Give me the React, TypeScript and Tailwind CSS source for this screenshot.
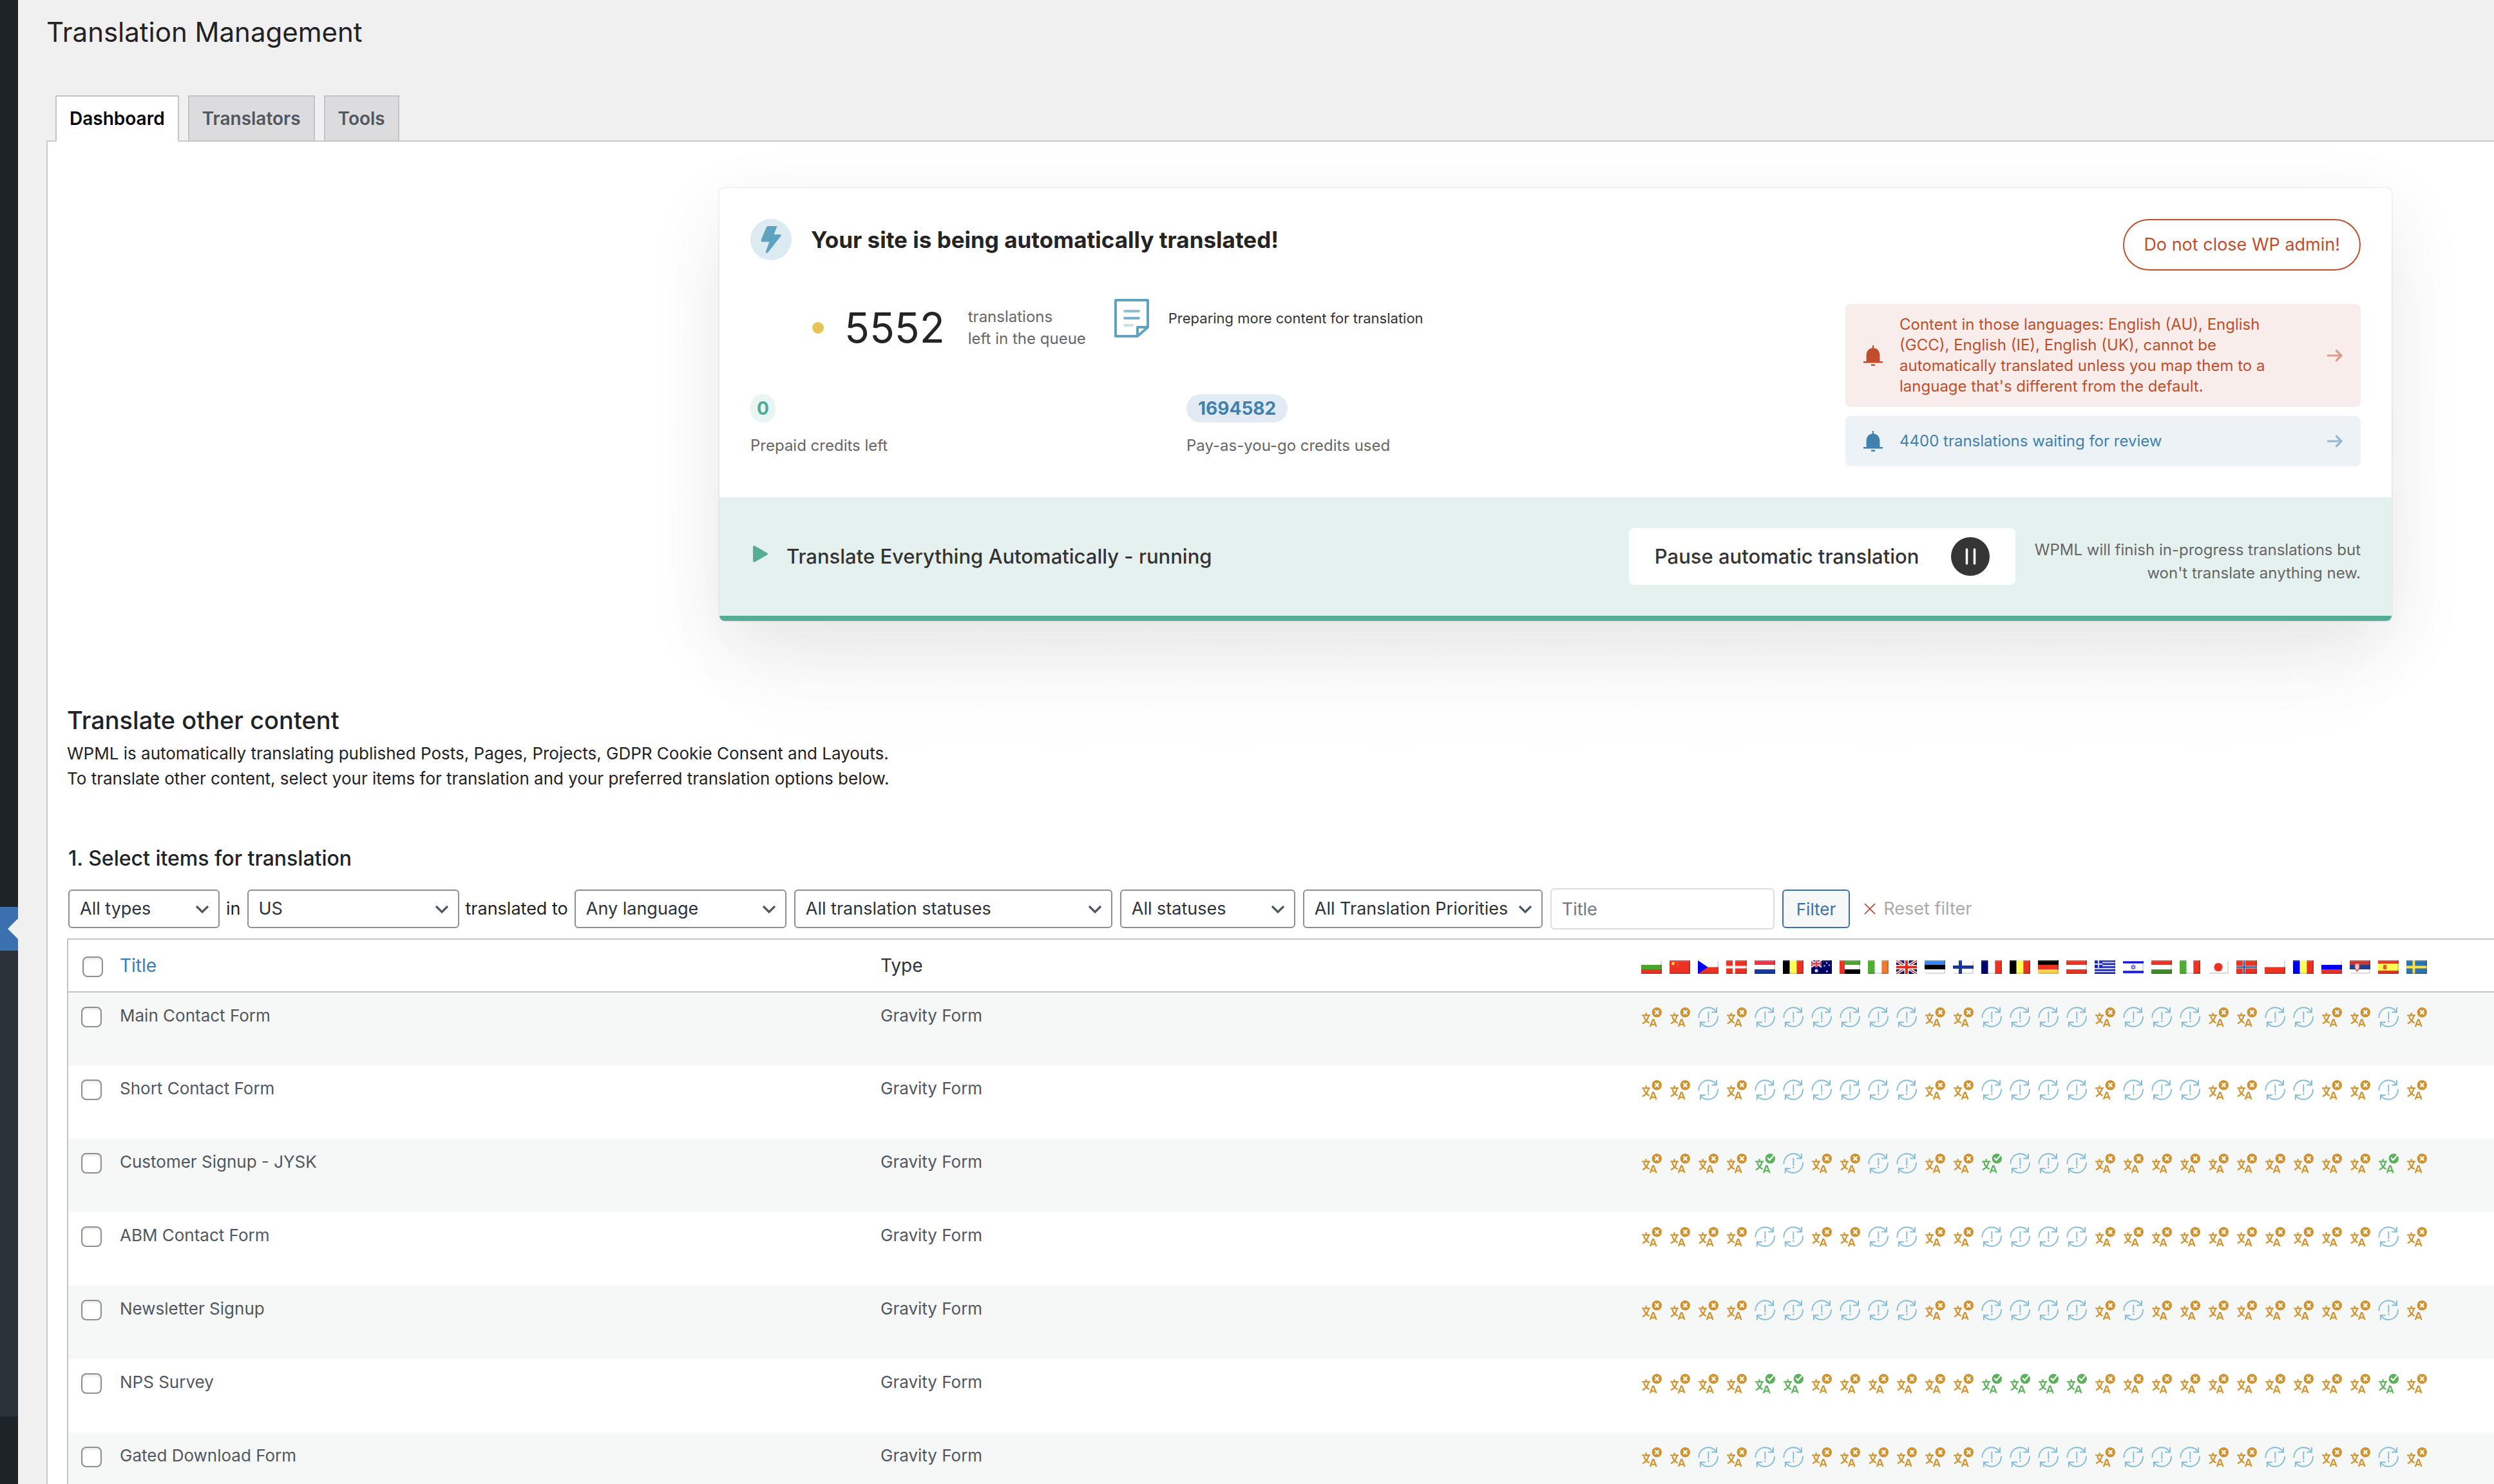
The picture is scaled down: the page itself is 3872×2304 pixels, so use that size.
import type { ReactNode } from "react";

type Status = "o" | "b" | "g";

const Stripes = ({ colors, vertical }: { colors: string[]; vertical?: boolean }) => {
  const n = colors.length;
  return (
    <>
      {colors.map((c, i) =>
        vertical ? (
          <rect key={i} x={(32 / n) * i} y="0" width={32 / n + 0.1} height="21" fill={c} />
        ) : (
          <rect key={i} x="0" y={(21 / n) * i} width="32" height={21 / n + 0.1} fill={c} />
        ),
      )}
    </>
  );
};

const NordicCross = ({ bg, outer, inner }: { bg: string; outer: string; inner?: string }) => (
  <>
    <rect width="32" height="21" fill={bg} />
    <path d="M12 0V21M0 10.5H32" stroke={outer} strokeWidth="4" />
    {inner && <path d="M12 0V21M0 10.5H32" stroke={inner} strokeWidth="2" />}
  </>
);

const UnionJack = () => (
  <>
    <rect width="32" height="21" fill="#00006b" />
    <path d="M0 0L32 21M32 0L0 21" stroke="#fff" strokeWidth="4.5" />
    <path d="M0 0L32 21M32 0L0 21" stroke="#e02c20" strokeWidth="1.6" />
    <path d="M16 0V21M0 10.5H32" stroke="#fff" strokeWidth="7" />
    <path d="M16 0V21M0 10.5H32" stroke="#e02c20" strokeWidth="4" />
  </>
);

const flags: { name: string; art: ReactNode }[] = [
  { name: "Bulgarian", art: <Stripes colors={["#ffffff", "#4aa52e", "#ec3323"]} /> },
  {
    name: "Chinese",
    art: (
      <>
        <rect width="32" height="21" fill="#ec3323" />
        <circle cx="5.5" cy="5" r="2.4" fill="#fbd648" />
        <path d="M10 2.5l3 1.5 1 3-3 3" fill="none" stroke="#f28a2c" strokeWidth="1.2" strokeDasharray="1.6 1.4" />
      </>
    ),
  },
  {
    name: "Czech",
    art: (
      <>
        <Stripes colors={["#ffffff", "#ec3323"]} />
        <path d="M0 0L15.5 10.5L0 21Z" fill="#0000ee" />
      </>
    ),
  },
  { name: "Danish", art: <NordicCross bg="#ec3323" outer="#fdf0ee" /> },
  { name: "Dutch", art: <Stripes colors={["#ee3347", "#ffffff", "#1538a4"]} /> },
  { name: "Dutch (BE)", art: <Stripes vertical colors={["#000000", "#ffff55", "#ec3323"]} /> },
  {
    name: "English (AU)",
    art: (
      <>
        <rect width="32" height="21" fill="#00006b" />
        <path d="M0 0L16 10.5M16 0L0 10.5" stroke="#f3c9cc" strokeWidth="2.6" />
        <path d="M8 0V10.5M0 5.2H16" stroke="#f3c9cc" strokeWidth="4" />
        <path d="M8 0V10.5M0 5.2H16" stroke="#e0444a" strokeWidth="2.4" />
        <circle cx="8" cy="16" r="2.6" fill="#dfe0f5" />
        <circle cx="24" cy="4" r="1.3" fill="#b6b6dc" />
        <circle cx="20.5" cy="8.5" r="1.3" fill="#b6b6dc" />
        <circle cx="28" cy="7.5" r="1.3" fill="#b6b6dc" />
        <circle cx="24.5" cy="17" r="1.5" fill="#b6b6dc" />
      </>
    ),
  },
  {
    name: "English (GCC)",
    art: (
      <>
        <Stripes colors={["#4aa52e", "#ffffff", "#000000"]} />
        <rect width="8" height="21" fill="#ec3323" />
      </>
    ),
  },
  { name: "English (IE)", art: <Stripes vertical colors={["#4fad33", "#ffffff", "#ef7a30"]} /> },
  { name: "English (UK)", art: <UnionJack /> },
  { name: "Estonian", art: <Stripes colors={["#3a86f0", "#000000", "#ffffff"]} /> },
  {
    name: "Finnish",
    art: (
      <>
        <rect width="32" height="21" fill="#ffffff" />
        <path d="M11.5 0V21M0 10.5H32" stroke="#1538a4" strokeWidth="5" />
      </>
    ),
  },
  { name: "French", art: <Stripes vertical colors={["#00006b", "#ffffff", "#ec3323"]} /> },
  { name: "French (BE)", art: <Stripes vertical colors={["#000000", "#ffff55", "#ec3323"]} /> },
  { name: "German", art: <Stripes colors={["#000000", "#ec3323", "#fbd648"]} /> },
  { name: "German (AT)", art: <Stripes colors={["#ec3323", "#ffffff", "#ec3323"]} /> },
  {
    name: "Greek",
    art: (
      <>
        <rect width="32" height="21" fill="#1a22b4" />
        <path d="M0 3.5H32M0 8.2H32M0 12.8H32M0 17.5H32" stroke="#d4d7f3" strokeWidth="2.2" />
        <rect width="12" height="11.6" fill="#1a22b4" />
        <path d="M6 0V11.6M0 5.8H12" stroke="#d4d7f3" strokeWidth="2.2" />
      </>
    ),
  },
  {
    name: "Hebrew",
    art: (
      <>
        <rect width="32" height="21" fill="#ffffff" />
        <path d="M0 3H32M0 18H32" stroke="#1414e8" strokeWidth="3.4" />
        <path d="M16 7l3 5.2h-6zM16 14l3-5.2h-6z" fill="none" stroke="#5c62e8" strokeWidth="1.2" />
      </>
    ),
  },
  { name: "Hungarian", art: <Stripes colors={["#ec3323", "#ffffff", "#3f8d29"]} /> },
  { name: "Italian", art: <Stripes vertical colors={["#4fad33", "#ffffff", "#ec3323"]} /> },
  {
    name: "Japanese",
    art: (
      <>
        <rect width="32" height="21" fill="#ffffff" />
        <circle cx="16" cy="10.5" r="6.6" fill="#ec3323" />
      </>
    ),
  },
  { name: "Norwegian", art: <NordicCross bg="#ec3323" outer="#c9d3e6" inner="#27568f" /> },
  { name: "Polish", art: <Stripes colors={["#ffffff", "#ec3323"]} /> },
  { name: "Romanian", art: <Stripes vertical colors={["#0000ee", "#ffff55", "#ec3323"]} /> },
  { name: "Russian", art: <Stripes colors={["#ffffff", "#0000ee", "#ec3323"]} /> },
  {
    name: "Serbian",
    art: (
      <>
        <Stripes colors={["#cd3632", "#243f8c", "#ffffff"]} />
        <path d="M8 5h7v7l-3.5 5L8 12z" fill="#e9c9c9" stroke="#cd3632" strokeWidth="1.2" />
      </>
    ),
  },
  {
    name: "Spanish",
    art: (
      <>
        <rect width="32" height="21" fill="#ec3323" />
        <rect y="5.2" width="32" height="10.6" fill="#ffff55" />
        <rect x="8" y="7" width="5.5" height="7" rx="1.5" fill="#d8602c" />
      </>
    ),
  },
  {
    name: "Swedish",
    art: (
      <>
        <rect width="32" height="21" fill="#2f73ab" />
        <path d="M11.5 0V21M0 10.5H32" stroke="#fbdf48" strokeWidth="3.8" />
      </>
    ),
  },
];

const Flag = ({ name, art }: { name: string; art: ReactNode }) => (
  <svg viewBox="0 0 32 21" className="block h-[21px] w-8" role="img" aria-label={name}>
    {art}
    <path d="M31 1V20H2" fill="none" stroke="#000" strokeOpacity="0.14" strokeWidth="2" />
    <path d="M0 1H30" fill="none" stroke="#fff" strokeOpacity="0.14" strokeWidth="2" />
  </svg>
);

const TranslateGlyph = () => (
  <g fill="none" stroke="currentColor" strokeWidth="2.2">
    <path d="M7.6 9.3V13M1.2 13.3H14" />
    <path d="M4.2 14.8C5.3 19.4 8 23 12.6 25.2" />
    <path d="M11.4 14C10.4 19.8 7.2 23.8 2 26.2" />
    <path d="M13.8 31.2L18 20H19.4L23.6 31.2M15.4 27.6H22" />
  </g>
);

const StatusIcon = ({ status }: { status: Status }) => {
  if (status === "b") {
    return (
      <svg viewBox="0 0 32 32" className="block size-8 text-[#84bdd8]" role="img" aria-label="Needs update">
        <g fill="none" stroke="currentColor" strokeWidth="1.9" strokeLinecap="round">
          <path d="M1.4 16.5C1.4 8 8 1.2 16.3 1.2C21.6 1.2 26 4 28.4 8" />
          <path d="M29 1.6V8.5H22" />
          <path d="M31 15.5C31 24 24.6 30.8 16.3 30.8C11 30.8 6.6 28.4 4.2 24.4" />
          <path d="M3.8 31V24.2H11" />
          <path d="M16.3 8.4V19" />
        </g>
        <circle cx="16.3" cy="22.6" r="1.3" fill="currentColor" />
      </svg>
    );
  }
  if (status === "g") {
    return (
      <svg viewBox="0 0 32 32" className="block size-8 text-[#5cb25a]" role="img" aria-label="Translated">
        <TranslateGlyph />
        <circle cx="24.3" cy="8.7" r="7.7" fill="currentColor" />
        <path d="M20 7.4L23.4 11L30.6 2.6" fill="none" stroke="#fff" strokeWidth="2.2" />
      </svg>
    );
  }
  return (
    <svg viewBox="0 0 32 32" className="block size-8 text-[#cf9330]" role="img" aria-label="Not translated">
      <TranslateGlyph />
      <circle cx="24.3" cy="8.7" r="7.7" fill="currentColor" />
      <path d="M21.5 5.6L27.3 11.8M27.3 5.6L21.5 11.8" stroke="#fff" strokeWidth="2.3" />
    </svg>
  );
};

const rows: { title: string; statuses: string }[] = [
  { title: "Main Contact Form", statuses: "oobobbbbbboobbbbobbboobboobo" },
  { title: "Short Contact Form", statuses: "oobobbbbbboobbbbobbboobboobo" },
  { title: "Customer Signup - JYSK", statuses: "oooogboobboogbbboooooooooogo" },
  { title: "ABM Contact Form", statuses: "oooobboobboobbbboooooooooobo" },
  { title: "Newsletter Signup", statuses: "oooobbbbbboobbbboboooooooobo" },
  { title: "NPS Survey", statuses: "ooooggooooooggggoooooooooogo" },
  { title: "Gated Download Form", statuses: "oobobboooooobbbbobbboobboobo" },
];

const Select = ({ label, value, width }: { label: string; value: string; width: string }) => (
  <div className={`relative shrink-0 ${width}`}>
    <select
      aria-label={label}
      defaultValue={value}
      className="h-[60px] w-full appearance-none rounded-md border-2 border-[#8c8f94] bg-white pl-4 text-[27px] text-[#2c3338]"
    >
      <option>{value}</option>
    </select>
    <svg viewBox="0 0 22 14" className="pointer-events-none absolute top-6 right-4 h-3.5 w-[22px]" aria-hidden="true">
      <path d="M2 2L11 11L20 2" fill="none" stroke="#50575e" strokeWidth="3.2" />
    </svg>
  </div>
);

const Checkbox = ({ label }: { label: string }) => (
  <input
    type="checkbox"
    aria-label={label}
    className="block size-8 appearance-none rounded-lg border-2 border-[#8c8f94] bg-white shadow-[inset_0_2px_4px_rgba(0,0,0,0.1)]"
  />
);

const Bell = () => (
  <svg viewBox="0 0 30 32" className="h-8 w-[30px] shrink-0" fill="currentColor" aria-hidden="true">
    <path d="M14 0h2v4.2c6 .8 9.4 5.4 9.4 11V25H30v2.6H0V25h4.6V15.2C4.6 9.6 8 5 14 4.2Z" />
    <rect x="12" y="29.5" width="6" height="2.5" />
  </svg>
);

const Arrow = () => (
  <svg viewBox="0 0 24 20" className="h-5 w-6 shrink-0 opacity-50" fill="none" stroke="currentColor" strokeWidth="3.2" aria-hidden="true">
    <path d="M0 10H22M13.5 1.5L22 10L13.5 18.5" />
  </svg>
);

const StatusCard = () => (
  <section className="mr-[159px] ml-auto w-full max-w-[2596px] rounded-lg bg-white shadow-[0_0_0_2px_rgba(0,0,0,0.04),0_40px_120px_rgba(0,0,0,0.09),0_120px_200px_-40px_rgba(0,0,0,0.03)]">
    <div className="flex justify-between p-12">
      <div>
        <div className="flex items-center gap-[30px]">
          <span className="flex size-16 items-center justify-center rounded-full bg-[#dcebf1]">
            <svg viewBox="0 0 32 42" className="h-[42px] w-8" fill="#60a3c0" aria-hidden="true">
              <path d="M11.5 0H25.5L20.5 13H30.5Q32.4 13.4 31.4 15.6L11 41.2Q8.4 43 7.6 40.6L13.4 24.6H2.4Q0 24 .6 21.5L8.8 1.8Q9.6 0 11.5 0Z" />
            </svg>
          </span>
          <h2 className="text-[35px] leading-[48px] font-bold text-[#242424]">Your site is being automatically translated!</h2>
        </div>
        <div className="mt-[60px] flex pl-24">
          <div className="flex h-[90px] items-center">
            <span className="size-[18px] rounded-full bg-[#e8c356]" />
            <span className="ml-8 text-[64px] leading-[90px] text-[#242424]">5552</span>
            <span className="ml-9 text-[24px] leading-[34px] text-[#666]">
              translations
              <br />
              left in the queue
            </span>
          </div>
          <div className="ml-11 flex h-[60px] items-center gap-[30px]">
            <svg viewBox="0 0 54 60" className="h-[60px] w-[54px]" fill="none" stroke="#60a3c0" strokeWidth="4" strokeLinejoin="round" aria-hidden="true">
              <path d="M2 2H52V44L36 58H2Z" />
              <path d="M36 58V44H52" />
              <path d="M16 19H38" stroke="#8fc0d4" strokeLinecap="round" />
              <path d="M16 30H38" stroke="#78b1cb" strokeLinecap="round" />
              <path d="M16 41H28" stroke="#c8e0ea" strokeLinecap="round" />
            </svg>
            <span className="text-[22px] leading-8 text-[#333]">Preparing more content for translation</span>
          </div>
        </div>
        <dl className="mt-[58px] flex">
          <div className="flex w-[677px] flex-col-reverse items-start gap-[18px]">
            <dt className="text-[24px] leading-9 text-[#666]">Prepaid credits left</dt>
            <dd className="rounded-full bg-[#e9f5f2] px-2.5 text-[28px] leading-[44px] font-bold text-[#4fab93]">0</dd>
          </div>
          <div className="flex flex-col-reverse items-start gap-[18px]">
            <dt className="text-[24px] leading-9 text-[#666]">Pay-as-you-go credits used</dt>
            <dd className="rounded-full bg-[#e2ebf3] px-[18px] text-[28px] leading-[44px] font-bold text-[#4280ad]">1694582</dd>
          </div>
        </dl>
      </div>
      <div className="flex w-[800px] flex-col">
        <button type="button" className="h-20 self-end rounded-full border-2 border-[#bf4f2c] px-[30px] text-[27px] text-[#bf4f2c]">
          Do not close WP admin!
        </button>
        <a href="#languages" className="mt-[52px] flex items-center rounded-lg bg-[#f9edeb] px-7 py-4 text-[#bf4f2c]">
          <Bell />
          <span className="ml-[26px] w-[600px] text-[24px] leading-8">
            Content in those languages: English (AU), English (GCC), English (IE), English (UK), cannot be automatically translated unless you map them to a language that's different from the default.
          </span>
          <span className="ml-auto">
            <Arrow />
          </span>
        </a>
        <a href="#review" className="mt-3.5 flex h-[78px] items-center rounded-lg bg-[#edf2f7] px-7 text-[#4280ad]">
          <Bell />
          <span className="ml-[26px] text-[24px] leading-8">4400 translations waiting for review</span>
          <span className="ml-auto">
            <Arrow />
          </span>
        </a>
      </div>
    </div>
    <div className="flex items-center rounded-b-lg border-b-8 border-[#55ad95] bg-[#e5f1ee] p-12">
      <svg viewBox="0 0 24 26" className="mb-2 ml-1 h-[26px] w-6 shrink-0" fill="#55ad95" aria-hidden="true">
        <path d="M0 2Q.5-.5 3 .6L22 11.4Q24.4 13 22 14.6L3 25.4Q.5 26.5 0 24Z" />
      </svg>
      <p className="ml-7 text-[31px] leading-[48px] font-medium text-[#333]">Translate Everything Automatically - running</p>
      <button type="button" className="ml-auto flex h-[88px] w-[600px] items-center justify-between rounded-lg bg-white px-10 text-[31px] font-medium text-[#333]">
        Pause automatic translation
        <svg viewBox="0 0 60 60" className="size-[60px]" aria-hidden="true">
          <circle cx="30" cy="30" r="30" fill="#353535" />
          <path d="M24.5 19V41M36.5 19V41" stroke="#fff" strokeWidth="3.5" strokeLinecap="round" />
        </svg>
      </button>
      <p className="ml-[30px] pt-4 text-right text-[24px] leading-9 text-[#666]">
        WPML will finish in-progress translations but
        <br />
        won't translate anything new.
      </p>
    </div>
  </section>
);

const Sidebar = () => (
  <aside className="w-7 shrink-0 bg-[#1d2327]">
    <div className="h-[1408px]" />
    <div className="relative h-[68px] bg-[#3a6fb0]">
      <span className="absolute top-[18px] right-0 border-y-[16px] border-r-[16px] border-y-transparent border-r-[#f0f0f0]" />
    </div>
    <div className="h-[723px] bg-[#2c3338]" />
  </aside>
);

const tabClass = "-mb-0.5 flex h-[72px] items-center border-2 border-[#c3c4c7] px-5 text-[28px] font-semibold";

export default function App() {
  return (
    <div className="flex h-screen overflow-hidden bg-[#f0f0f0] font-['Inter',sans-serif] text-[#1d2327]">
      <Sidebar />
      <main className="min-w-0 flex-1 pt-5 pl-11">
        <h1 className="text-[42px] leading-[60px] text-[#222]">Translation Management</h1>
        <nav className="mt-[68px] flex gap-3.5 pl-3.5">
          <a href="#dashboard" aria-current="page" className={`${tabClass} relative z-10 border-b-white bg-white text-black`}>
            Dashboard
          </a>
          <a href="#translators" className={`${tabClass} bg-[#dcdcde] text-[#50575e]`}>
            Translators
          </a>
          <a href="#tools" className={`${tabClass} bg-[#dcdcde] text-[#50575e]`}>
            Tools
          </a>
        </nav>
        <div className="min-h-screen border-t-2 border-l-2 border-[#ccc] bg-white pt-[72px] pl-[30px]">
          <StatusCard />
          <h2 className="mt-[130px] text-[38px] leading-[48px] font-medium">Translate other content</h2>
          <p className="mt-2 text-[26px] leading-[39px] text-[#222]">
            WPML is automatically translating published Posts, Pages, Projects, GDPR Cookie Consent and Layouts.
            <br />
            To translate other content, select your items for translation and your preferred translation options below.
          </p>
          <h3 className="mt-[85px] pl-0.5 text-[32px] leading-10 font-medium">1. Select items for translation</h3>
          <form className="mt-[26px] flex items-center gap-3 pl-0.5 text-[27px]" onSubmit={(e) => e.preventDefault()}>
            <Select label="Content type" value="All types" width="w-[235px]" />
            <span className="-mx-0.5">in</span>
            <Select label="Source language" value="US" width="w-[329px]" />
            <span className="-mx-0.5">translated to</span>
            <Select label="Target language" value="Any language" width="w-[329px]" />
            <Select label="Translation status" value="All translation statuses" width="w-[494px]" />
            <Select label="Publication status" value="All statuses" width="w-[272px]" />
            <Select label="Priority" value="All Translation Priorities" width="w-[372px]" />
            <input
              type="text"
              aria-label="Title"
              placeholder="Title"
              className="h-16 w-[348px] rounded-md border-2 border-[#ddd] bg-white px-4 text-[27px] placeholder:text-[#72777c]"
            />
            <button type="submit" className="h-[60px] rounded-md border-2 border-[#3a6fb0] bg-[#f6f7f7] px-5 text-[26px] text-[#3a6fb0]">
              Filter
            </button>
            <button type="reset" className="ml-2.5 flex items-center gap-3 text-[#aaa]">
              <svg viewBox="0 0 18 18" className="size-[18px]" stroke="#b32d1e" strokeWidth="1.5" aria-hidden="true">
                <path d="M1 1L17 17M17 1L1 17" />
              </svg>
              Reset filter
            </button>
          </form>
          <div className="mt-3.5 border-t-2 border-l-2 border-[#c3c4c7]">
            <table className="w-full table-fixed border-collapse text-left">
              <colgroup>
                <col className="w-20" />
                <col />
                <col />
                <col className="w-[1324px]" />
              </colgroup>
              <thead>
                <tr className="h-[81px] border-b-2 border-[#c3c4c7] text-[28px] leading-10">
                  <th className="pt-1 pl-[22px]">
                    <Checkbox label="Select all" />
                  </th>
                  <th className="font-normal">
                    <a href="#title" className="text-[#3a7cae]">
                      Title
                    </a>
                  </th>
                  <th className="font-normal text-[#2c3338]">Type</th>
                  <th className="pt-1">
                    <div className="flex gap-3">
                      {flags.map((f) => (
                        <Flag key={f.name} name={f.name} art={f.art} />
                      ))}
                    </div>
                  </th>
                </tr>
              </thead>
              <tbody>
                {rows.map((row) => (
                  <tr key={row.title} className="h-[114px] align-top text-[26px] leading-10 text-[#50575e] odd:bg-[#f6f7f7]">
                    <td className="pt-[22px] pl-5">
                      <Checkbox label={`Select ${row.title}`} />
                    </td>
                    <td className="pt-4">{row.title}</td>
                    <td className="pt-4">Gravity Form</td>
                    <td className="pt-[22px]">
                      <div className="flex gap-3">
                        {row.statuses.split("").map((s, i) => (
                          <StatusIcon key={i} status={s as Status} />
                        ))}
                      </div>
                    </td>
                  </tr>
                ))}
              </tbody>
            </table>
          </div>
        </div>
      </main>
    </div>
  );
}
